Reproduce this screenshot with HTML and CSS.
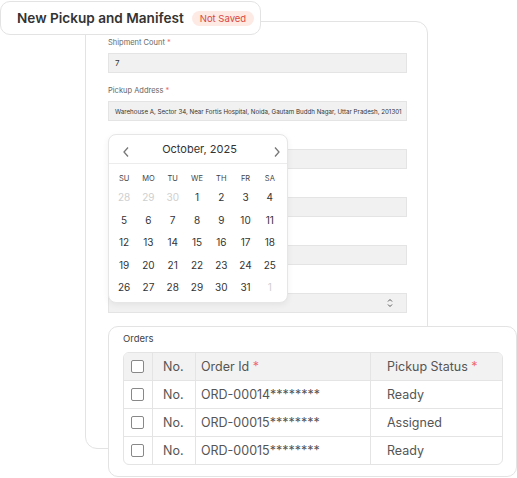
FILE: index.html
```html
<!DOCTYPE html>
<html lang="en">
<head>
    <meta charset="UTF-8">
    <meta name="viewport" content="width=device-width, initial-scale=1.0">
    <title>New Pickup and Manifest</title>
    <link rel="stylesheet" href="styles.css">
</head>
<body>
    <div class="stage">
        <!-- Title chip -->
        <div class="title-card">
            <h1>New Pickup and Manifest</h1>
            <span class="badge">Not Saved</span>
        </div>

        <!-- Pickup form -->
        <div class="form-card">
            <div class="form-group">
                <label>Shipment Count <span class="req">*</span></label>
                <div class="input">7</div>
            </div>
            <div class="form-group">
                <label>Pickup Address <span class="req">*</span></label>
                <div class="input small">Warehouse A, Sector 34, Near Fortis Hospital, Noida, Gautam Buddh Nagar, Uttar Pradesh, 201301</div>
            </div>
            <!-- campos abaixo ficam sob o calendário aberto -->
            <div class="form-group">
                <label></label>
                <div class="input"></div>
            </div>
            <div class="form-group">
                <label></label>
                <div class="input"></div>
            </div>
            <div class="form-group">
                <label></label>
                <div class="input"></div>
            </div>
            <div class="form-group">
                <label></label>
                <div class="input select">
                    <svg width="6" height="10" viewBox="0 0 6 10">
                        <polyline points="1,3.5 3,1.5 5,3.5" fill="none" stroke="#555" stroke-width="1"/>
                        <polyline points="1,6.5 3,8.5 5,6.5" fill="none" stroke="#555" stroke-width="1"/>
                    </svg>
                </div>
            </div>

            <!-- Orders table -->
            <div class="orders-card">
                <div class="orders-title">Orders</div>
                <table class="orders">
                    <thead>
                        <tr>
                            <th class="col-check"><span class="check"></span></th>
                            <th class="col-no">No.</th>
                            <th class="col-id">Order Id <span class="req">*</span></th>
                            <th>Pickup Status <span class="req">*</span></th>
                        </tr>
                    </thead>
                    <tbody id="orderRows"></tbody>
                </table>
            </div>
        </div>

        <!-- Date picker popup -->
        <div class="calendar">
            <div class="cal-head">
                <svg class="nav" width="8" height="12" viewBox="0 0 8 12"><polyline points="6,1.5 2,6 6,10.5" fill="none" stroke="#777" stroke-width="1.3"/></svg>
                <span>October, 2025</span>
                <svg class="nav" width="8" height="12" viewBox="0 0 8 12"><polyline points="2,1.5 6,6 2,10.5" fill="none" stroke="#777" stroke-width="1.3"/></svg>
            </div>
            <div class="cal-grid" id="calGrid"></div>
        </div>
    </div>

    <script>
        // Monta o calendário de outubro/2025
        const grid = document.getElementById("calGrid");
        ["SU", "MO", "TU", "WE", "TH", "FR", "SA"].forEach(d => {
            const el = document.createElement("div");
            el.className = "wd";
            el.textContent = d;
            grid.appendChild(el);
        });
        const dias = [28, 29, 30];
        for (let i = 1; i <= 31; i++) dias.push(i);
        dias.push(1);
        dias.forEach((d, i) => {
            const el = document.createElement("div");
            el.className = "day";
            if (i < 3 || i === dias.length - 1) el.classList.add("muted");
            el.textContent = d;
            grid.appendChild(el);
        });

        // Linhas da tabela de pedidos
        const pedidos = [
            { id: "ORD-00014********", status: "Ready" },
            { id: "ORD-00015********", status: "Assigned" },
            { id: "ORD-00015********", status: "Ready" }
        ];
        const rows = document.getElementById("orderRows");
        pedidos.forEach(p => {
            const tr = document.createElement("tr");
            tr.innerHTML = `
                <td class="col-check"><span class="check"></span></td>
                <td class="col-no">No.</td>
                <td class="col-id">${p.id}</td>
                <td>${p.status}</td>
            `;
            rows.appendChild(tr);
        });
    </script>
</body>
</html>
```

FILE: styles.css
```css
* {
    margin: 0;
    padding: 0;
    box-sizing: border-box;
    font-family: Inter, "DejaVu Sans", sans-serif;
}

body {
    background-color: #fff;
    color: #333;
}

.stage {
    position: relative;
    width: 517px;
    height: 478px;
    padding-top: 21px;
}

.title-card {
    position: absolute;
    left: 0;
    top: 1px;
    width: 261px;
    height: 34px;
    background-color: #fff;
    border: 1px solid #e3e3e3;
    border-radius: 10px;
    display: flex;
    align-items: center;
    padding-left: 16px;
    z-index: 2;
}

.title-card h1 {
    font-size: 13.6px;
    font-weight: 600;
    color: #333;
}

.badge {
    margin-left: 8px;
    background-color: #fdeae5;
    color: #d8483f;
    font-size: 9.5px;
    padding: 2px 8px;
    border-radius: 8px;
}

.form-card {
    margin-left: 85px;
    width: 343px;
    height: 428px;
    border: 1px solid #e3e3e3;
    border-radius: 12px;
    padding: 15px 20px 0 22px;
}

.form-group {
    margin-bottom: 12px;
}

.form-group label {
    display: block;
    height: 12px;
    font-size: 7.5px;
    line-height: 12px;
    color: #666;
    margin-bottom: 4px;
}

.req {
    color: #ee6b6b;
}

.input {
    height: 20px;
    background-color: #f1f1f1;
    border: 1px solid #e4e4e4;
    font-size: 8px;
    color: #333;
    padding-left: 6px;
    display: flex;
    align-items: center;
}

.input.small {
    font-size: 6.2px;
    white-space: nowrap;
    overflow: hidden;
}

.input.select {
    justify-content: flex-end;
    padding-right: 13px;
}

.orders-card {
    margin-top: 13px;
    width: 409px;
    height: 151px;
    background-color: #fff;
    border: 1px solid #e3e3e3;
    border-radius: 10px;
    padding: 6px 14px 0 14px;
}

.orders-title {
    font-size: 9.5px;
    line-height: 12px;
    color: #444;
    margin-bottom: 7px;
}

.orders {
    width: 380px;
    border-collapse: separate;
    border-spacing: 0;
    border: 1px solid #e4e4e4;
    border-radius: 6px;
    overflow: hidden;
}

.orders th, .orders td {
    height: 28px;
    font-size: 12.5px;
    font-weight: 400;
    color: #555;
    text-align: left;
    padding-left: 6px;
    border-left: 1px solid #e4e4e4;
    border-top: 1px solid #e4e4e4;
}

.orders th {
    background-color: #f2f2f2;
    border-top: none;
    height: 27px;
}

.orders th:first-child, .orders td:first-child {
    border-left: none;
}

.orders .col-check {
    width: 28px;
    padding-left: 7px;
}

.orders .col-no {
    width: 43px;
    padding-left: 10px;
}

.orders .col-id {
    width: 175px;
    padding-left: 5px;
}

.orders th:last-child, .orders td:last-child {
    padding-left: 16px;
}

.check {
    display: block;
    width: 13px;
    height: 13px;
    border: 1.5px solid #888;
    border-radius: 2px;
    background-color: #fff;
}

.calendar {
    position: absolute;
    left: 108px;
    top: 134px;
    width: 180px;
    height: 169px;
    background-color: #fff;
    border: 1px solid #e6e6e6;
    border-radius: 8px;
    box-shadow: 0 2px 6px rgba(0, 0, 0, 0.06);
    z-index: 3;
}

.cal-head {
    height: 29px;
    border-bottom: 1px solid #ececec;
    display: flex;
    align-items: center;
    justify-content: space-between;
    padding: 0 6px 0 13px;
    font-size: 11px;
    color: #333;
}

.cal-head span {
    margin-left: -4px;
}

.cal-head .nav {
    margin-top: 5px;
}

.cal-grid {
    display: grid;
    grid-template-columns: repeat(7, 1fr);
    grid-template-rows: 16px;
    grid-auto-rows: 22.5px;
    padding: 6px 5px 0 3px;
}

.cal-grid .wd {
    font-size: 7.5px;
    color: #444;
    display: flex;
    align-items: center;
    justify-content: center;
}

.cal-grid .day {
    font-size: 10px;
    color: #333;
    display: flex;
    align-items: center;
    justify-content: center;
}

.cal-grid .muted {
    color: #cfcfcf;
}
```
